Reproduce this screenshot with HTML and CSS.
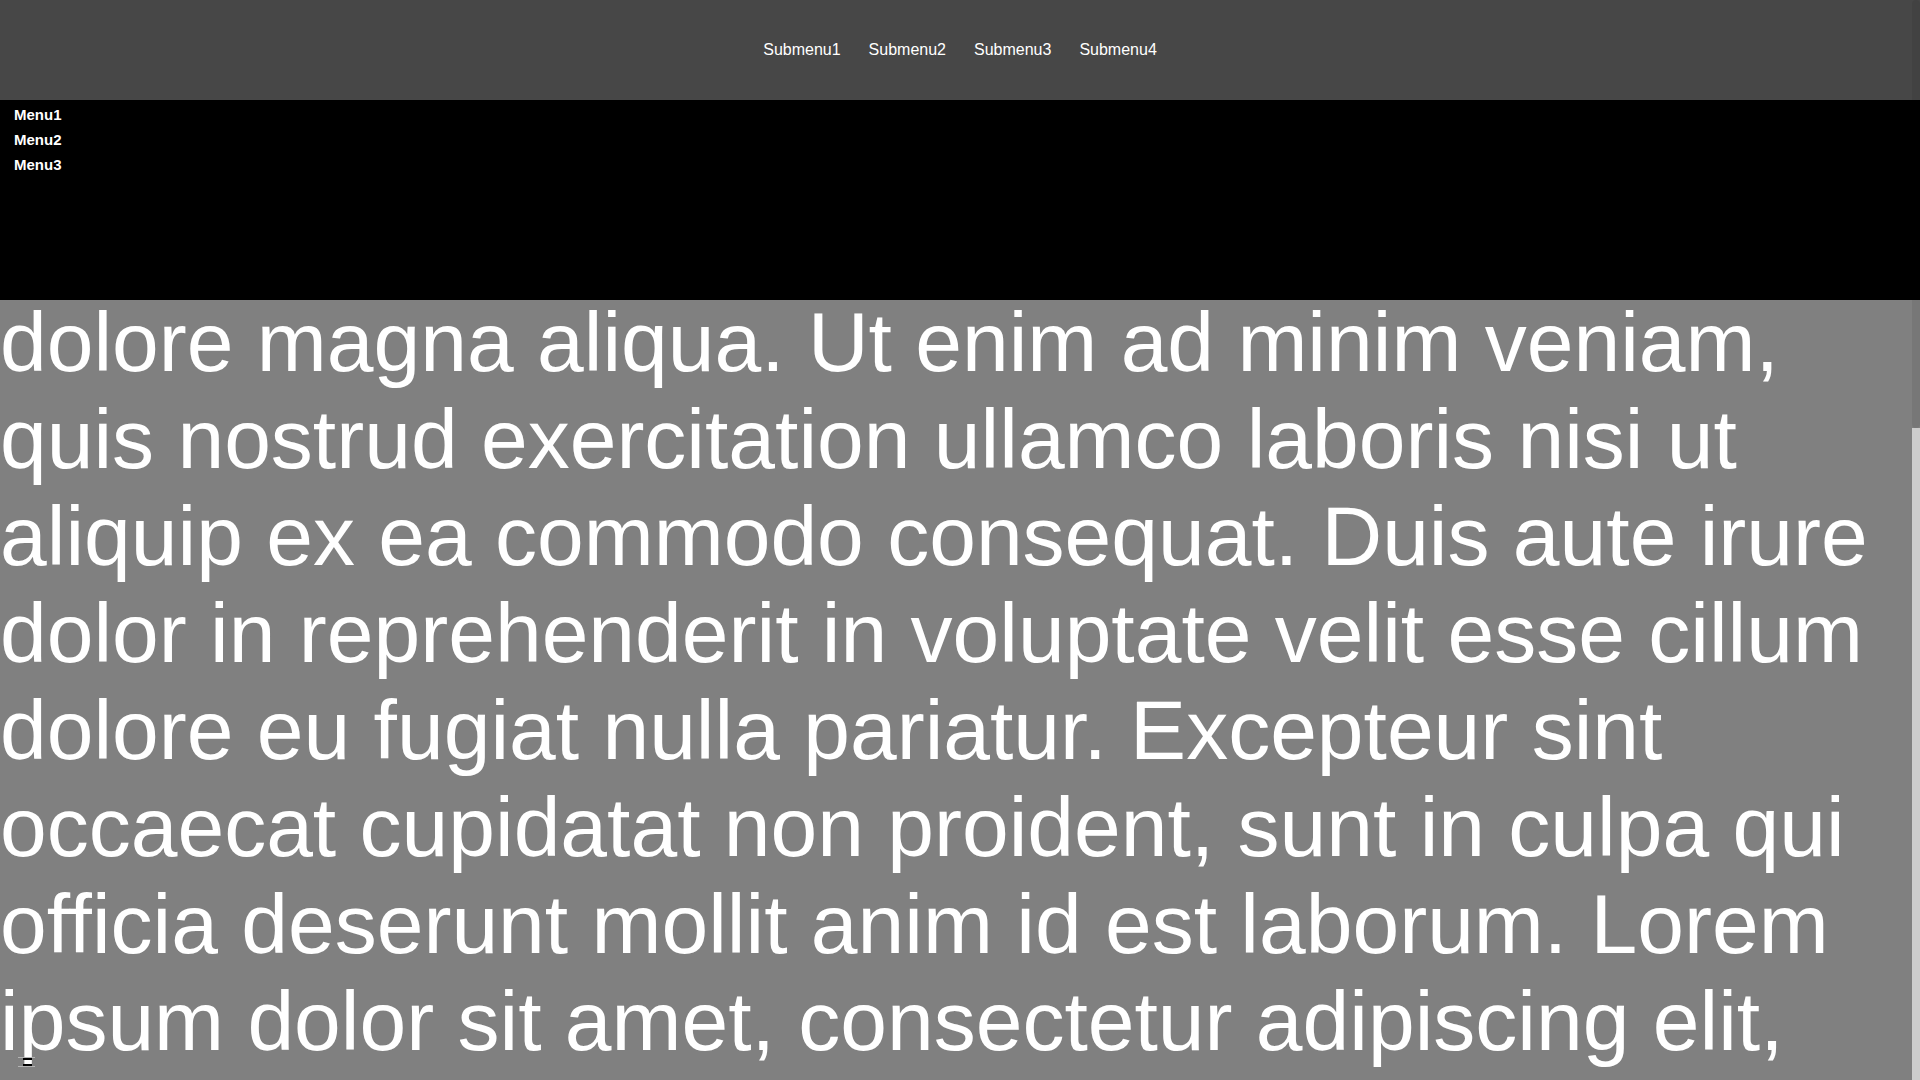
FILE: index.html
```html
<!DOCTYPE html>
<html lang="en">
<head>
<meta charset="utf-8">
<title>Menu page</title>
<link rel="stylesheet" href="styles.css">
</head>
<body>
<div class="page">
  <header class="topbar">
    <nav class="submenu">
      <a class="submenu-item" href="#">Submenu1</a>
      <a class="submenu-item" href="#">Submenu2</a>
      <a class="submenu-item" href="#">Submenu3</a>
      <a class="submenu-item" href="#">Submenu4</a>
    </nav>
  </header>
  <section class="menubar">
    <ul class="menu">
      <li class="menu-item">Menu1</li>
      <li class="menu-item">Menu2</li>
      <li class="menu-item">Menu3</li>
    </ul>
  </section>
  <main class="content">
    <p class="lorem">dolore magna aliqua. Ut enim ad minim veniam,<br>quis nostrud exercitation ullamco laboris nisi ut<br>aliquip ex ea commodo consequat. Duis aute irure<br>dolor in reprehenderit in voluptate velit esse cillum<br>dolore eu fugiat nulla pariatur. Excepteur sint<br>occaecat cupidatat non proident, sunt in culpa qui<br>officia deserunt mollit anim id est laborum. Lorem<br>ipsum dolor sit amet, consectetur adipiscing elit,<br>sed do eiusmod tempor incididunt ut labore et</p>
  </main>
</div>
<div class="scrollbar"><div class="scroll-thumb"></div><div class="scroll-track"></div></div>
<svg class="cursor" width="18" height="14" viewBox="0 0 18 14">
  <rect x="0" y="2" width="17" height="1" fill="#b4b4b4"/>
  <rect x="5" y="3" width="9" height="2" fill="#000"/>
  <rect x="8" y="5" width="3" height="4" fill="#fff"/>
  <rect x="5" y="9" width="9" height="2" fill="#000"/>
  <rect x="0" y="11" width="17" height="1" fill="#b4b4b4"/>
</svg>
</body>
</html>
```

FILE: styles.css
```css
html, body {
  margin: 0;
  padding: 0;
  height: 100%;
  overflow: hidden;
}

body {
  background: #808080;
  font-family: "Liberation Sans", Arial, sans-serif;
}

.page {
  display: flex;
  flex-direction: column;
  height: 1080px;
}

.topbar {
  height: 100px;
  flex: 0 0 100px;
  background: #474747;
  display: flex;
  align-items: center;
  justify-content: center;
}

.submenu {
  display: flex;
  gap: 28px;
}

.submenu-item {
  color: #ffffff;
  text-decoration: none;
  font-size: 16px;
}

.menubar {
  flex: 0 0 200px;
  background: #000000;
}

.menu {
  list-style: none;
  margin: 0;
  padding: 2px 0 0 14px;
}

.menu-item {
  color: #ffffff;
  font-size: 15px;
  font-weight: bold;
  line-height: 25px;
}

.content {
  flex: 1 1 auto;
  overflow: hidden;
  background: #808080;
}

.lorem {
  margin: -6px 0 0 0;
  color: #ffffff;
  font-size: 84px;
  line-height: 97px;
  white-space: nowrap;
}

.scrollbar {
  position: fixed;
  top: 0;
  right: 0;
  width: 8px;
  height: 1080px;
  display: flex;
  flex-direction: column;
}

.scroll-thumb {
  flex: 0 0 428px;
  background: rgba(0, 0, 0, 0.07);
  border-radius: 4px;
}

.scroll-track {
  flex: 1 1 auto;
  background: #cdcdcd;
}

.cursor {
  position: fixed;
  left: 18px;
  top: 1055px;
}
```
